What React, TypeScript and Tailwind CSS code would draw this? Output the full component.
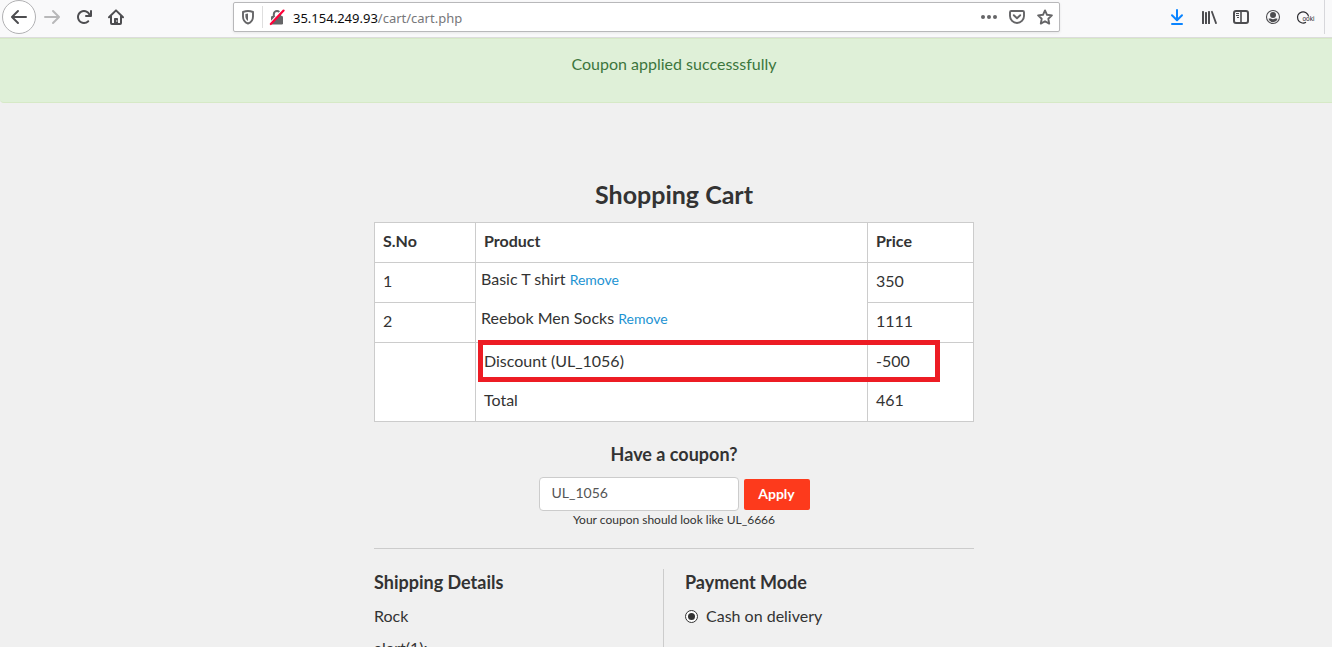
import { useState } from "react";
import type { ReactNode } from "react";

function ToolButton({ label, children }: { label: string; children: ReactNode }) {
  return (
    <button type="button" aria-label={label} className="flex h-8 w-8 shrink-0 items-center justify-center">
      {children}
    </button>
  );
}

function Icon({ children, color = "text-[#4d4d50]" }: { children: ReactNode; color?: string }) {
  return (
    <svg viewBox="0 0 16 16" aria-hidden="true" className={`h-4 w-4 shrink-0 overflow-visible ${color}`} fill="currentColor">
      {children}
    </svg>
  );
}

function BackArrow() {
  return (
    <path d="M15 7H3.414l4.293-4.293a1 1 0 0 0-1.414-1.414l-6 6a1 1 0 0 0 0 1.414l6 6a1 1 0 0 0 1.414-1.414L3.414 9H15a1 1 0 0 0 0-2z" />
  );
}

function BrowserBar() {
  return (
    <header className="flex h-[38px] shrink-0 items-start border-b border-[#dcdcdc] bg-[#f9f9fa] pr-[11px]">
      <div className="flex shrink-0 items-center pl-[2px]">
        <button
          type="button"
          aria-label="Back"
          className="flex h-[34px] w-[34px] items-center justify-center rounded-full border border-[#b1b1b3] bg-white"
        >
          <Icon><BackArrow /></Icon>
        </button>
        <ToolButton label="Forward">
          <Icon color="text-[#b8b8b9]">
            <g transform="matrix(-1 0 0 1 16 0)"><BackArrow /></g>
          </Icon>
        </ToolButton>
        <ToolButton label="Reload">
          <Icon>
            <path d="M15 1a1 1 0 0 0-1 1v2.418A6.995 6.995 0 1 0 8 15a6.954 6.954 0 0 0 4.95-2.05 1 1 0 0 0-1.414-1.414A5.019 5.019 0 1 1 12.549 6H10a1 1 0 0 0 0 2h5a1 1 0 0 0 1-1V2a1 1 0 0 0-1-1z" />
          </Icon>
        </ToolButton>
        <ToolButton label="Home">
          <Icon>
            <path d="M1 8.2 8 1.4l7 6.800" fill="none" stroke="currentColor" strokeWidth="2" strokeLinecap="round" strokeLinejoin="round" />
            <path d="M3 7v7.100c0 .5.4.9.9.9h8.200c.5 0 .9-.4.9-.9V7" fill="none" stroke="currentColor" strokeWidth="2" />
            <path d="M6 15V9.600c0-.4.3-.6.6-.6h2.800c.3 0 .6.2.6.6V15z" />
            <circle cx="8.800" cy="12" r=".7" fill="#f9f9fa" />
          </Icon>
        </ToolButton>
      </div>

      <div className="mx-[101px] mt-[2px] flex h-[30px] min-w-0 flex-1 items-center rounded-[2px] border border-[#b8b8ba] bg-white pl-[6px] pr-[6px] shadow-[0_1px_3px_rgba(0,0,0,0.08)]">
        <Icon color="text-[#656567]">
          <path d="M8 2c-1.800 0-3.400.4-5 1v4.500C3 11 5 13.500 8 14.500c3-1 5-3.500 5-7V3c-1.600-.6-3.200-1-5-1z" fill="none" stroke="currentColor" strokeWidth="1.900" strokeLinejoin="round" />
          <path d="M8 4.500v7.400C6.300 10.900 5.400 9.400 5.400 7.300V5C6.200 4.700 7.100 4.500 8 4.500z" />
        </Icon>
        <span className="mx-[6px] h-[22px] w-px shrink-0 bg-[#dedede]" />
        <Icon color="text-[#656567]">
          <path d="M4.800 8V5.200a3.200 3.200 0 0 1 6.400 0V8" fill="none" stroke="currentColor" strokeWidth="2" />
          <rect x="2" y="7" width="12" height="8.500" rx="1.300" />
          <path d="M.6 14.200 13.600.6" stroke="#ffffff" strokeWidth="1.400" />
          <path d="M1.800 15 14.600 1.600" stroke="#ff0039" strokeWidth="2.200" strokeLinecap="round" />
        </Icon>
        <p className="ml-2 min-w-0 flex-1 truncate pt-px font-['Noto_Sans',sans-serif] text-[13px] leading-5 text-[#77777a]">
          <span className="text-[#0c0c0d]">35.154.249.93</span>/cart/cart.php
        </p>
        <div className="flex shrink-0 gap-3">
          <button type="button" aria-label="Page actions">
            <Icon color="text-[#656567]">
              <circle cx="2" cy="8" r="2" /><circle cx="8" cy="8" r="2" /><circle cx="14" cy="8" r="2" />
            </Icon>
          </button>
          <button type="button" aria-label="Save to Pocket">
            <Icon color="text-[#656567]">
              <path d="M2.300 2h11.400c.7 0 1.300.6 1.300 1.300V7A7 7 0 0 1 1 7V3.300C1 2.600 1.600 2 2.300 2z" fill="none" stroke="currentColor" strokeWidth="1.900" />
              <path d="m4.800 6.200 3.200 3 3.200-3" fill="none" stroke="currentColor" strokeWidth="1.900" strokeLinecap="round" strokeLinejoin="round" />
            </Icon>
          </button>
          <button type="button" aria-label="Bookmark this page">
            <Icon color="text-[#656567]">
              <path d="m8 1.400 2 4.400 4.900.6-3.600 3.300.9 4.900L8 12.200l-4.200 2.400.9-4.900L1.100 6.400 6 5.800z" fill="none" stroke="currentColor" strokeWidth="1.900" strokeLinejoin="round" />
            </Icon>
          </button>
        </div>
      </div>

      <div className="mt-px flex shrink-0 items-center">
        <ToolButton label="Downloads">
          <Icon color="text-[#0a84ff]">
            <path d="M8 1v9.500M3 6.200l5 5 5-5" fill="none" stroke="currentColor" strokeWidth="2" strokeLinecap="round" strokeLinejoin="round" />
            <rect x="2" y="14" width="12" height="2" rx="1" />
          </Icon>
        </ToolButton>
        <ToolButton label="Library">
          <Icon>
            <rect x="1" y="2" width="2" height="13" rx=".6" />
            <rect x="4" y="3" width="2" height="12" rx=".6" />
            <rect x="7" y="2" width="2" height="13" rx=".6" />
            <path d="m10.900 2.800 4.100 11.300" stroke="currentColor" strokeWidth="1.800" strokeLinecap="round" />
          </Icon>
        </ToolButton>
        <ToolButton label="Sidebars">
          <Icon>
            <rect x="1" y="2" width="14" height="12" rx="2" fill="none" stroke="currentColor" strokeWidth="2" />
            <path d="M8 2v12" stroke="currentColor" strokeWidth="1.600" />
            <path d="M3 4.500h3M3 6.500h3M4 8.500h2" stroke="currentColor" strokeWidth="1" />
          </Icon>
        </ToolButton>
        <ToolButton label="Account">
          <Icon>
            <circle cx="8" cy="8" r="6.500" fill="none" stroke="currentColor" strokeWidth="1.100" />
            <circle cx="8" cy="6" r="3" />
            <path d="M3.400 9.800c1.200-.4 1.800-.6 2.500-.2 1.300.8 2.900.8 4.200 0 .7-.4 1.300-.2 2.500.2A5.200 5.200 0 0 1 8 13.200a5.200 5.200 0 0 1-4.600-3.400z" />
          </Icon>
        </ToolButton>
        <ToolButton label="Cookie manager">
          <Icon color="text-[#2a2a2e]">
            <path d="M9 13.200A5.600 5.600 0 1 1 11.600 7.500" fill="none" stroke="currentColor" strokeWidth="1.200" />
            <text x="5.500" y="12" fontSize="6.500" fontFamily="Liberation Sans, sans-serif">ooki</text>
          </Icon>
        </ToolButton>
      </div>
      <span className="-mr-[4px] ml-[3px] h-[34px] w-px shrink-0 bg-[#d7d7db]" />
    </header>
  );
}

const items = [
  { id: 1, name: "Basic T shirt", price: "350" },
  { id: 2, name: "Reebok Men Socks", price: "1111" },
];

function CartTable() {
  return (
    <div className="relative">
      <table className="w-full table-fixed border-collapse border border-[#ccc] bg-white text-left">
        <colgroup>
          <col className="w-[101px]" />
          <col />
          <col className="w-[106px]" />
        </colgroup>
        <thead>
          <tr className="h-10">
            <th scope="col" className="border border-[#ccc] px-2 pb-1 font-bold">S.No</th>
            <th scope="col" className="border border-[#ccc] px-2 pb-1 font-bold">Product</th>
            <th scope="col" className="border border-[#ccc] px-2 pb-1 font-bold">Price</th>
          </tr>
        </thead>
        <tbody>
          {items.map((item) => (
            <tr key={item.id} className="h-10">
              <td className="border border-[#ccc] px-2 pb-1">{item.id}</td>
              <td className="px-[5px] pb-2">
                {item.name} <a href="#remove" className="text-sm text-[#1d93d2]">Remove</a>
              </td>
              <td className="border border-[#ccc] px-2 pb-1">{item.price}</td>
            </tr>
          ))}
          <tr className="h-10">
            <td rowSpan={2} className="border border-[#ccc]" />
            <td className="border-x border-t border-[#ccc] px-2 pb-1">Discount (UL_1056)</td>
            <td className="border-x border-t border-[#ccc] px-2 pb-1">-500</td>
          </tr>
          <tr className="h-[39px]">
            <td className="border-x border-[#ccc] px-2 pb-1">Total</td>
            <td className="border-x border-[#ccc] px-2 pb-1">461</td>
          </tr>
        </tbody>
      </table>
      <div className="pointer-events-none absolute top-[118px] right-[34px] left-[104px] h-[42px] border-5 border-[#ed1c24]" />
    </div>
  );
}

export default function App() {
  const [coupon, setCoupon] = useState("UL_1056");

  return (
    <div className="flex h-screen flex-col overflow-hidden bg-[#f0f0f0] font-['Lato',sans-serif] text-base leading-6 text-[#333]">
      <BrowserBar />
      <div role="status" className="h-[65px] shrink-0 rounded-bl border-y border-[#d6e9c6] bg-[#dff0d8] pt-[13px] pl-4 text-center text-[#3c763d]">
        Coupon applied successsfully
      </div>

      <main className="pt-[75px] pl-4">
        <div className="mx-auto w-full max-w-[600px]">
          <h1 className="mb-3 text-center text-[25px] leading-8 font-bold">Shopping Cart</h1>
          <CartTable />

          <form className="pt-5 text-center" onSubmit={(event) => event.preventDefault()}>
            <label htmlFor="coupon" className="block text-lg leading-6 font-bold">Have a coupon?</label>
            <div className="mt-[11px] flex items-center justify-center gap-[5px]">
              <input
                id="coupon"
                type="text"
                value={coupon}
                onChange={(event) => setCoupon(event.target.value)}
                className="h-[34px] w-[200px] rounded border border-[#ccc] bg-white px-3 pb-[3px] text-sm text-[#555]"
              />
              <button type="submit" className="h-[31px] w-[66px] rounded-[2px] bg-[#fd3a1c] text-sm font-bold text-white">
                Apply
              </button>
            </div>
            <p className="text-xs leading-[18px]">Your coupon should look like UL_6666</p>
          </form>

          <hr className="mt-[19px] mb-5 border-[#ccc]" />

          <div className="flex">
            <section className="w-[290px] border-r border-[#ccc]">
              <h2 className="text-lg leading-[26px] font-bold">Shipping Details</h2>
              <p className="mt-[9px]">Rock</p>
              <p className="mt-2">alert(1);</p>
            </section>
            <section className="flex-1 pl-[21px]">
              <h2 className="text-lg leading-[26px] font-bold">Payment Mode</h2>
              <label className="mt-[9px] flex items-center gap-2">
                <input
                  type="radio"
                  name="payment"
                  defaultChecked
                  className="flex h-[13px] w-[13px] appearance-none items-center justify-center rounded-full border border-[#333] bg-white checked:before:h-[7px] checked:before:w-[7px] checked:before:rounded-full checked:before:bg-[#333] checked:before:content-['']"
                />
                Cash on delivery
              </label>
            </section>
          </div>
        </div>
      </main>
    </div>
  );
}
